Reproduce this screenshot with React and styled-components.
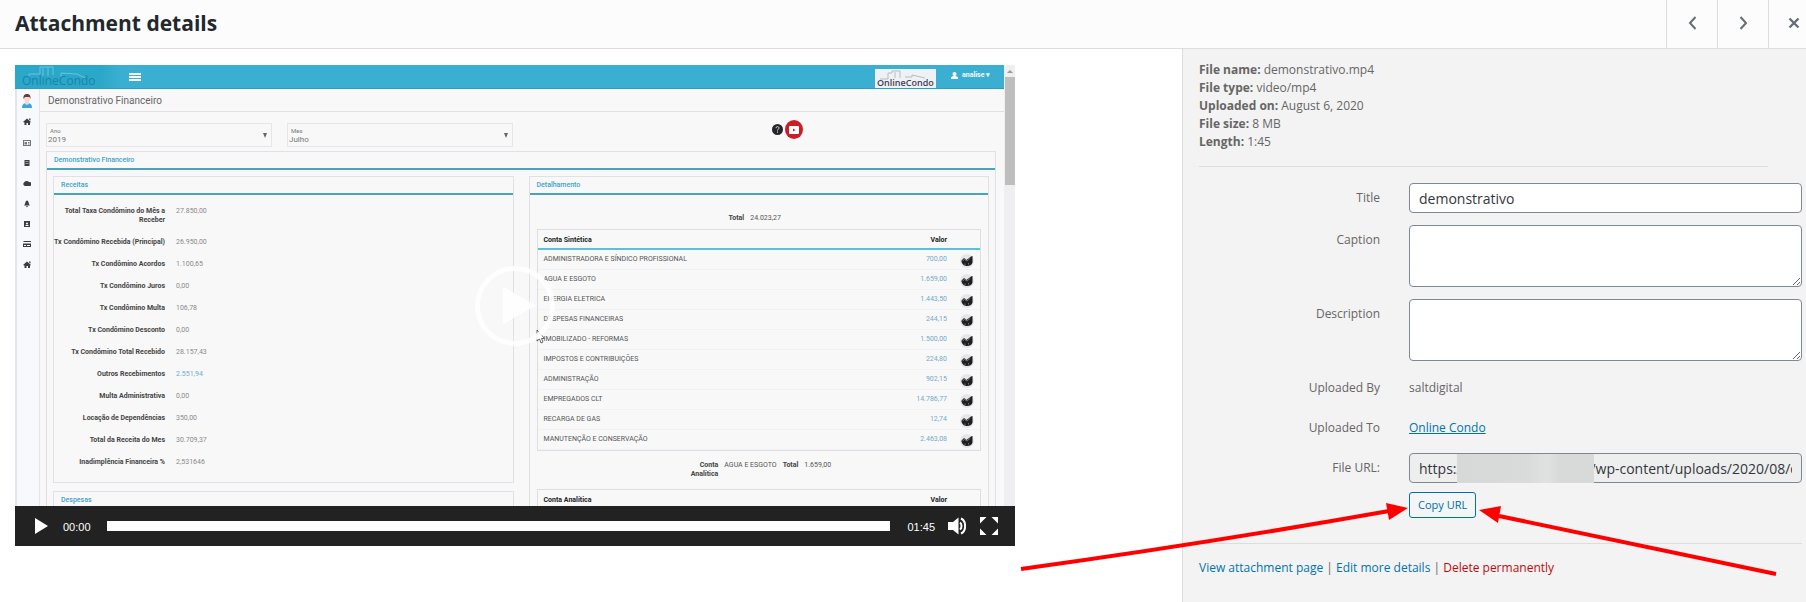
import React from 'react';
import styled, { createGlobalStyle } from 'styled-components';

const Global = createGlobalStyle`
  *, *::before, *::after { box-sizing: border-box; }
  body { margin: 0; background: #fff; color: #444; font: 12px/18px "Open Sans", "Noto Sans", sans-serif; }
  button, input, textarea, select { font-family: inherit; }
`;

const Page = styled.div`
  display: flex;
  flex-direction: column;
  min-height: 100vh;
  overflow: hidden;
`;

const Header = styled.header`
  display: flex;
  height: 49px;
  background: #fcfcfc;
  border-bottom: 1px solid #ddd;
`;

const Heading = styled.h1`
  flex: 1;
  margin: 0;
  padding: 0 15px;
  font-size: 21px;
  line-height: 46px;
  font-weight: 700;
  color: #23282d;
`;

const NavButton = styled.button`
  display: flex;
  align-items: center;
  justify-content: center;
  width: 51px;
  padding: 0 0 2px;
  border: 0;
  border-left: 1px solid #ddd;
  background: transparent;
  color: #666d74;
  &:last-child { width: 38px; padding-left: 12px; }
`;

const Content = styled.main`
  flex: 1;
  display: grid;
  grid-template-columns: minmax(0, 1fr) 624px;
`;

const MediaPane = styled.section`
  padding: 16px 15px;
`;

const Player = styled.div`
  position: relative;
  max-width: 1000px;
  font-family: Roboto, sans-serif;
`;

const Screen = styled.div`
  display: flex;
  height: 441px;
  overflow: hidden;
  background: #f8f8f9;
`;

const Site = styled.div`
  flex: 1;
  min-width: 0;
`;

const ScrollTrack = styled.div`
  width: 11px;
  background: #efeef1;
  display: flex;
  flex-direction: column;
  align-items: center;
`;

const ScrollArrow = styled.span`
  height: 12px;
  padding-top: 5px;
  &::before {
    content: '';
    display: block;
    border: 3px solid transparent;
    border-top: 0;
    border-bottom: 3px solid #999;
  }
`;

const ScrollThumb = styled.span`
  width: 10px;
  height: 108px;
  background: #bebebe;
`;

const SiteBar = styled.div`
  display: flex;
  align-items: center;
  height: 24px;
  background: #3bafd1;
  border-bottom: 1px solid #2b9fc1;
`;

const Brand = styled.div`
  align-self: stretch;
  width: 106px;
  background: linear-gradient(90deg, #2ba7c9 80%, #3bafd1);
`;

const BrandBadge = styled.div`
  width: 61px;
  height: 19px;
  margin: 3px 15px 0 auto;
  background: #eef1f6;
`;

const Account = styled.button`
  display: flex;
  align-items: center;
  gap: 4px;
  width: 51px;
  padding: 0 0 3px;
  margin-right: 2px;
  border: 0;
  background: transparent;
  color: #f2fbff;
  font-size: 7px;
  line-height: 9px;
  font-weight: 700;
`;

const MenuButton = styled.button`
  display: flex;
  padding: 0;
  margin-left: 8px;
  border: 0;
  background: transparent;
`;

const SiteBody = styled.div`
  display: flex;
  height: 100%;
`;

const Rail = styled.nav`
  width: 25px;
  padding-right: 2px;
  background: #f8f9fc;
  border-left: 2px solid #e4e4ea;
  border-right: 1px solid #e6e4e9;
`;

const Avatar = styled.div`
  display: flex;
  align-items: center;
  justify-content: center;
  height: 23px;
`;

const RailList = styled.div`
  display: grid;
  grid-template-rows: repeat(8, 1fr);
  height: 163px;
`;

const RailLink = styled.a`
  display: flex;
  align-items: center;
  justify-content: center;
`;

const SiteMain = styled.div`
  flex: 1;
  min-width: 0;
`;

const SiteTitle = styled.h2`
  margin: 0;
  padding: 0 8px;
  height: 23px;
  border-bottom: 1px solid #e0dfe4;
  font-size: 10px;
  line-height: 23px;
  font-weight: 400;
  color: #666;
`;

const Filters = styled.div`
  display: flex;
  align-items: center;
  gap: 15px;
  height: 39px;
  padding: 6px 6px 0;
`;

const Filter = styled.label`
  position: relative;
  display: flex;
  flex-direction: column;
  width: 226px;
  height: 24px;
  padding: 3px 0 0 1px;
  border: 1px solid #e5e5ea;
  font-size: 6px;
  line-height: 8px;
  color: #777;
  & > span { padding-left: 2px; }
  &::after {
    content: '';
    position: absolute;
    right: 4px;
    top: 9px;
    border: 2px solid transparent;
    border-top: 5px solid #666;
    border-bottom: 0;
  }
`;

const FilterSelect = styled.select`
  appearance: none;
  width: 100%;
  padding: 0;
  border: 0;
  background: transparent;
  color: #777;
  font-size: 8px;
  line-height: 9px;
`;

const HelpIcons = styled.div`
  display: flex;
  align-items: center;
  gap: 2px;
  margin: 0 195px 10px auto;
`;

const Sheet = styled.section`
  margin: 0 8px 0 6px;
  border: 1px solid #e2e0e6;
`;

const PanelTitle = styled.h3`
  margin: 0;
  padding: 0 7px;
  height: 18px;
  border-bottom: 2px solid #4aa3bd;
  font-size: 7px;
  line-height: 16px;
  font-weight: 500;
  color: #3ba3c9;
`;

const Columns = styled.div`
  display: grid;
  grid-template-columns: 460fr 460fr;
  align-items: start;
  gap: 15px;
  padding: 6px 6px 0;
`;

const Stack = styled.div`
  display: flex;
  flex-direction: column;
  gap: 8px;
`;

const Panel = styled.section`
  border: 1px solid #e2e0e6;
`;

const Facts = styled.dl`
  display: grid;
  grid-template-columns: 111px 1fr;
  gap: 13px 11px;
  margin: 0;
  padding: 12px 0 15px;
  font-size: 7px;
  line-height: 9px;
  dt { text-align: right; font-weight: 700; color: #444; }
`;

const Amount = styled.dd`
  margin: 0;
  color: ${p => (p.$link ? '#74aacb' : '#8a8a8a')};
`;

const DetailBody = styled.div`
  padding: 19px 7px 0;
`;

const Totals = styled.div`
  display: flex;
  justify-content: center;
  align-items: flex-start;
  gap: 6px;
  font-size: 7px;
  line-height: 9px;
  color: #555;
  margin: ${p => (p.$account ? '10px 0' : '0 8px 6px 0')};
  b { color: #444; text-align: right; }
  b:first-child { max-width: 32px; }
`;

const Accounts = styled.table`
  width: 100%;
  border: 1px solid #dfdde3;
  border-spacing: 0;
  font-size: 7px;
  line-height: 9px;
  color: #555;
  th, td { padding: 0; text-align: left; }
  th { height: 20px; padding-top: 2px; border-bottom: 2px solid #5cc0d9; color: #222; }
  th:first-child, td:first-child { padding-left: 6px; }
  th:nth-child(2), td:nth-child(2) { width: 60px; text-align: right; }
  th:last-child, td:last-child { width: 33px; padding: 2px 0 0 13px; }
  td { height: 20px; border-bottom: 1px solid #f2f1f4; }
  td:nth-child(2) { color: #74aacb; }
  svg { display: block; }
`;

const BigPlay = styled.button`
  position: absolute;
  left: 50%;
  top: 50%;
  width: 80px;
  height: 80px;
  margin: -40px 0 0 -40px;
  padding: 0;
  border: 0;
  background: transparent;
  svg { display: block; }
`;

const Pointer = styled.svg`
  position: absolute;
  left: 521px;
  top: 264px;
`;

const Controls = styled.div`
  display: flex;
  align-items: center;
  height: 40px;
  padding: 0 17px 0 20px;
  background: #222;
  color: #fff;
  font: 11px/16px "Liberation Sans", Arial, sans-serif;
`;

const ControlButton = styled.button`
  display: flex;
  padding: 0;
  border: 0;
  background: transparent;
`;

const Time = styled.span`
  padding-top: 2px;
  margin: ${p => (p.$end ? '0 13px 0 17px' : '0 16px 0 15px')};
`;

const Seek = styled.input`
  flex: 1;
  min-width: 0;
  height: 10px;
  margin: 0;
  appearance: none;
  background: #fff;
  &::-webkit-slider-thumb { appearance: none; width: 0; height: 10px; }
`;

const ControlGroup = styled.div`
  display: flex;
  gap: 14px;
  align-items: center;
`;

const Sidebar = styled.aside`
  padding: 12px 4px 0 16px;
  background: #f3f3f3;
  border-left: 1px solid #ddd;
  color: #666;
`;

const Meta = styled.ul`
  list-style: none;
  margin: 0 34px 16px 0;
  padding: 0 0 15px;
  border-bottom: 1px solid #ddd;
`;

const Field = styled.div`
  display: grid;
  grid-template-columns: 181px minmax(0, 1fr);
  column-gap: 29px;
  margin-bottom: ${p => p.$gap || 12}px;
  line-height: 30px;
`;

const FieldLabel = styled.label`
  text-align: right;
`;

const fieldBox = `
  display: block;
  width: 100%;
  border: 1px solid #7e8993;
  border-radius: 4px;
  background: #fff;
  color: #32373c;
  font-size: 14px;
  outline: 0;
`;

const TextInput = styled.input`
  ${fieldBox}
  height: 30px;
  padding: 0 9px;
  &:read-only { background: #eee; }
`;

const TextArea = styled.textarea`
  ${fieldBox}
  height: 62px;
  padding: 6px 9px;
  resize: vertical;
`;

const UrlBox = styled.div`
  position: relative;
`;

const Redaction = styled.span`
  position: absolute;
  left: 48px;
  top: 1px;
  width: 137px;
  height: 29px;
  background: linear-gradient(90deg, #d6d9d8, #d9dbda 50%, #e0e2e1 66%, #d8dad9 75%, #d8dad9);
`;

const Link = styled.a`
  color: ${p => (p.$danger ? '#bc0b0b' : '#0073aa')};
  text-decoration: ${p => (p.$underline ? 'underline' : 'none')};
`;

const CopyBox = styled.div`
  position: relative;
  margin: -3px 0 25px 210px;
`;

const CopyButton = styled.button`
  display: block;
  height: 26px;
  padding: 0 8px;
  border: 1px solid #0071a1;
  border-radius: 3px;
  background: #f3f5f6;
  color: #0071a1;
  font-size: 11px;
  line-height: 24px;
`;

const Arrows = styled.svg`
  position: absolute;
  left: -400px;
  top: 0;
  pointer-events: none;
`;

const Actions = styled.div`
  padding-top: 15px;
  border-top: 1px solid #ddd;
`;

const facts = [
  ['Total Taxa Condômino do Mês a Receber', '27.850,00'],
  ['Tx Condômino Recebida (Principal)', '26.950,00'],
  ['Tx Condômino Acordos', '1.100,65'],
  ['Tx Condômino Juros', '0,00'],
  ['Tx Condômino Multa', '106,78'],
  ['Tx Condômino Desconto', '0,00'],
  ['Tx Condômino Total Recebido', '28.157,43'],
  ['Outros Recebimentos', '2.551,94', true],
  ['Multa Administrativa', '0,00'],
  ['Locação de Dependências', '350,00'],
  ['Total da Receita do Mes', '30.709,37'],
  ['Inadimplência Financeira %', '2,531646'],
];

const accounts = [
  ['ADMINISTRADORA E SÍNDICO PROFISSIONAL', '700,00'],
  ['AGUA E ESGOTO', '1.659,00'],
  ['ENERGIA ELETRICA', '1.443,50'],
  ['DESPESAS FINANCEIRAS', '244,15'],
  ['IMOBILIZADO - REFORMAS', '1.500,00'],
  ['IMPOSTOS E CONTRIBUIÇÕES', '224,80'],
  ['ADMINISTRAÇÃO', '902,15'],
  ['EMPREGADOS CLT', '14.786,77'],
  ['RECARGA DE GAS', '12,74'],
  ['MANUTENÇÃO E CONSERVAÇÃO', '2.463,08'],
];

const meta = [
  ['File name:', 'demonstrativo.mp4'],
  ['File type:', 'video/mp4'],
  ['Uploaded on:', 'August 6, 2020'],
  ['File size:', '8 MB'],
  ['Length:', '1:45'],
];

const house = <path d="M0 4 4 0.500 8 4 7 4.500V7H5V5H3.500V7H1.500V4.500ZM6 0.500H7.500V2.500L6 1.500Z" />;
const railIcons = [
  ['Início', house],
  ['Cadastro', <path d="M0 1H8V7H0ZM1 2V6H7V2ZM1.500 3H4V5.500H1.500ZM5 3H6.500V4H5ZM5 4.500H6.500V5.500H5Z" opacity="0.7" />],
  ['Livro', <path d="M1.500 1H6.500V7H1.500ZM2.500 2.500V3H5.500V2.500ZM2.500 4V4.500H5.500V4Z" />],
  ['Nuvem', <path d="M2 7A2 2 0 0 1 1 3.500 3 2.500 0 0 1 6 3 2 2 0 0 1 7 7Z" />],
  ['Avisos', <path d="M4 0.500C6 1 5.500 4 7 5.500H1C2.500 4 2 1 4 0.500ZM3 6H5L4 7.500Z" />],
  ['Contatos', <path d="M1 1H7V7H1ZM3 3.500A1 1 0 1 0 5 3.500 1 1 0 1 0 3 3.500M2.500 6H5.500V5H2.500Z" />],
  ['Pagamentos', <path d="M0.500 1H8V2H0.500ZM0 3.500H8V7H0ZM1 5V6H3V5ZM4 5V6H7V5Z" />],
  ['Unidades', house],
];

const ChartIcon = () => (
  <svg width="14" height="14" viewBox="0 0 14 14" aria-hidden="true">
    <circle cx="7" cy="7" r="7" fill="#e6e6e9" />
    <path d="M1.500 6.500 4 4 6.500 6 11 2.500 12.500 2V8.500C12 11 9.500 12 7 12S3 11 1.500 8Z" fill="#1d1d1f" />
    <path d="M2.500 7 4.500 5.500 7 7 10.500 4M5 9.500V11M8.500 9V10.500" stroke="#aaa" strokeWidth="0.6" fill="none" />
  </svg>
);

function AccountsTable({ heading, rows }) {
  return (
    <Accounts>
      <thead>
        <tr><th scope="col">{heading}</th><th scope="col">Valor</th><th aria-label="Gráfico" /></tr>
      </thead>
      <tbody>
        {rows.map(([name, value]) => (
          <tr key={name}><td>{name}</td><td>{value}</td><td><ChartIcon /></td></tr>
        ))}
      </tbody>
    </Accounts>
  );
}

function VideoFrame() {
  return (
    <Screen>
      <Site>
        <SiteBar>
          <Brand>
            <svg width="106" height="23" viewBox="0 0 106 23" aria-label="OnlineCondo">
              <path d="M14 13V9H25V2H38V10M28 3V12M33 2V11M46 12V8L62 9 70 13" fill="none" stroke="#6cc4de" strokeWidth="1" />
              <text x="7" y="20" fontSize="12" fontFamily="Open Sans" fill="#1c83a8">OnlineCondo</text>
            </svg>
          </Brand>
          <MenuButton aria-label="Menu">
            <svg width="12" height="8" viewBox="0 0 12 8"><path d="M0 1H12M0 4H12M0 7H12" stroke="#fff" strokeWidth="2" /></svg>
          </MenuButton>
          <BrandBadge>
            <svg width="61" height="19" viewBox="0 0 61 19" aria-label="OnlineCondo">
              <path d="M5 10H13V4H17V2H25V9M20 3V9M30 8H37V6L50 9" fill="none" stroke="#b9bcc4" />
              <text x="2" y="17" fontSize="9" fontFamily="Open Sans" fontWeight="600" fill="#433f52">OnlineCondo</text>
            </svg>
          </BrandBadge>
          <Account>
            <svg width="7" height="7" viewBox="0 0 7 7" fill="#fff"><circle cx="3.500" cy="2" r="2" /><path d="M0 7C0 4 2 4 3.500 4S7 4 7 7Z" /></svg>
            <span>analise ▾</span>
          </Account>
        </SiteBar>
        <SiteBody>
          <Rail>
            <Avatar>
              <svg width="12" height="14" viewBox="0 0 12 14">
                <path d="M1 14C1 10 3 9 6 9S11 10 11 14Z" fill="#35a9e0" />
                <path d="M4 7H8V10L6 11 4 10Z" fill="#f4d3c8" />
                <circle cx="6" cy="5" r="3" fill="#f6d9cf" />
                <path d="M2.500 5C2 1 4 0 6 0S10 1 9.500 5L8.500 3H4Z" fill="#6b3a3a" />
              </svg>
            </Avatar>
            <RailList>
              {railIcons.map(([name, icon]) => (
                <RailLink key={name} href="#" aria-label={name}>
                  <svg width="8" height="8" viewBox="0 0 8 8" fill="#3c3d42" fillRule="evenodd">{icon}</svg>
                </RailLink>
              ))}
            </RailList>
          </Rail>
          <SiteMain>
            <SiteTitle>Demonstrativo Financeiro</SiteTitle>
            <Filters>
              <Filter>
                <span>Ano</span>
                <FilterSelect defaultValue="2019"><option>2019</option></FilterSelect>
              </Filter>
              <Filter>
                <span>Mes</span>
                <FilterSelect defaultValue="Julho"><option>Julho</option></FilterSelect>
              </Filter>
              <HelpIcons>
                <svg width="11" height="11" viewBox="0 0 11 11">
                  <circle cx="5.500" cy="5.500" r="5.500" fill="#26262a" />
                  <path d="M4 4.200C4 2 7 2.200 7 4 7 5.200 5.500 5 5.500 6.500M5.500 7.500V8.700" fill="none" stroke="#ddd" />
                </svg>
                <svg width="18" height="19" viewBox="0 0 18 19">
                  <ellipse cx="9" cy="9.500" rx="9" ry="9.500" fill="#c81f2b" />
                  <rect x="4" y="6" width="10" height="8" rx="1" fill="#fff" />
                  <path d="M8 8.500V11.500L10.500 10Z" fill="#c81f2b" />
                </svg>
              </HelpIcons>
            </Filters>
            <Sheet>
              <PanelTitle>Demonstrativo Financeiro</PanelTitle>
              <Columns>
                <Stack>
                  <Panel>
                    <PanelTitle>Receitas</PanelTitle>
                    <Facts>
                      {facts.map(([name, value, link]) => (
                        <React.Fragment key={name}>
                          <dt>{name}</dt>
                          <Amount $link={link}>{value}</Amount>
                        </React.Fragment>
                      ))}
                    </Facts>
                  </Panel>
                  <Panel>
                    <PanelTitle>Despesas</PanelTitle>
                  </Panel>
                </Stack>
                <Panel>
                  <PanelTitle>Detalhamento</PanelTitle>
                  <DetailBody>
                    <Totals><b>Total</b><span>24.023,27</span></Totals>
                    <AccountsTable heading="Conta Sintética" rows={accounts} />
                    <Totals $account>
                      <b>Conta Analítica</b><span>AGUA E ESGOTO</span><b>Total</b><span>1.659,00</span>
                    </Totals>
                    <AccountsTable heading="Conta Analítica" rows={[]} />
                  </DetailBody>
                </Panel>
              </Columns>
            </Sheet>
          </SiteMain>
        </SiteBody>
      </Site>
      <ScrollTrack><ScrollArrow /><ScrollThumb /></ScrollTrack>
    </Screen>
  );
}

export default function App() {
  return (
    <Page>
      <Global />
      <Header>
        <Heading>Attachment details</Heading>
        <NavButton aria-label="Previous">
          <svg width="9" height="14" viewBox="0 0 9 14"><path d="M7.500 1 2 7 7.500 13" fill="none" stroke="currentColor" strokeWidth="2" /></svg>
        </NavButton>
        <NavButton aria-label="Next">
          <svg width="9" height="14" viewBox="0 0 9 14"><path d="M1.500 1 7 7 1.500 13" fill="none" stroke="currentColor" strokeWidth="2" /></svg>
        </NavButton>
        <NavButton aria-label="Close">
          <svg width="12" height="12" viewBox="0 0 12 12"><path d="M1.500 1.500 10.500 10.500M10.500 1.500 1.500 10.500" stroke="currentColor" strokeWidth="2.300" /></svg>
        </NavButton>
      </Header>
      <Content>
        <MediaPane>
          <Player>
            <VideoFrame />
            <Pointer width="9" height="15" viewBox="0 0 9 15">
              <path d="M1 1V12L3.500 10 5 14 7 13 5.500 9.500H8.500Z" fill="#fff" stroke="#555" strokeWidth="0.900" />
            </Pointer>
            <BigPlay aria-label="Play video">
              <svg width="80" height="80" viewBox="0 0 80 80" opacity="0.9">
                <circle cx="40" cy="40" r="37.500" fill="none" stroke="#fff" strokeWidth="5" />
                <path d="M28 20.500 61 39.500 28 58.500Z" fill="#fff" />
              </svg>
            </BigPlay>
            <Controls>
              <ControlButton aria-label="Play">
                <svg width="13" height="16" viewBox="0 0 13 16"><path d="M0 0 13 8 0 16Z" fill="#fff" /></svg>
              </ControlButton>
              <Time>00:00</Time>
              <Seek type="range" min="0" max="105" defaultValue="0" aria-label="Seek" />
              <Time $end>01:45</Time>
              <ControlGroup>
                <ControlButton aria-label="Mute">
                  <svg width="18" height="18" viewBox="0 0 18 18" fill="none" stroke="#fff">
                    <path d="M0 5H5L10.500 0.500V17.500L5 13H0Z" fill="#fff" stroke="none" />
                    <path d="M12 5.500C14 7 14 11 12 12.500M13 1.500C18.500 4 18.500 14 13 16.500" strokeWidth="2" />
                  </svg>
                </ControlButton>
                <ControlButton aria-label="Fullscreen">
                  <svg width="18" height="18" viewBox="0 0 18 18" fill="#fff"><path d="M0 0H6.500L0 6.500ZM18 0H11.500L18 6.500ZM0 18H6.500L0 11.500ZM18 18H11.500L18 11.500Z" /></svg>
                </ControlButton>
              </ControlGroup>
            </Controls>
          </Player>
        </MediaPane>
        <Sidebar>
          <Meta>
            {meta.map(([k, v]) => <li key={k}><strong>{k}</strong> {v}</li>)}
          </Meta>
          <Field>
            <FieldLabel htmlFor="title">Title</FieldLabel>
            <TextInput id="title" defaultValue="demonstrativo" />
          </Field>
          <Field>
            <FieldLabel htmlFor="caption">Caption</FieldLabel>
            <TextArea id="caption" />
          </Field>
          <Field>
            <FieldLabel htmlFor="description">Description</FieldLabel>
            <TextArea id="description" />
          </Field>
          <Field $gap={10}>
            <FieldLabel as="span">Uploaded By</FieldLabel>
            <span>saltdigital</span>
          </Field>
          <Field $gap={10}>
            <FieldLabel as="span">Uploaded To</FieldLabel>
            <span><Link href="#" $underline>Online Condo</Link></span>
          </Field>
          <Field>
            <FieldLabel htmlFor="url">File URL:</FieldLabel>
            <UrlBox>
              <TextInput id="url" readOnly value={`https://${'\u00a0'.repeat(34)}/wp-content/uploads/2020/08/demonstrativo.mp4`} />
              <Redaction />
            </UrlBox>
          </Field>
          <CopyBox>
            <CopyButton>Copy URL</CopyButton>
            <Arrows width="790" height="100" viewBox="0 0 790 100" fill="red" stroke="red">
              <path d="M12 77Q200 51 380 19" fill="none" strokeWidth="4" />
              <path d="M399 16 377 11 380 28Z" stroke="none" />
              <path d="M767 82 490 24" fill="none" strokeWidth="4" />
              <path d="M470 18 492 14 489 31Z" stroke="none" />
            </Arrows>
          </CopyBox>
          <Actions>
            <Link href="#">View attachment page</Link> | <Link href="#">Edit more details</Link> | <Link href="#" $danger>Delete permanently</Link>
          </Actions>
        </Sidebar>
      </Content>
    </Page>
  );
}
